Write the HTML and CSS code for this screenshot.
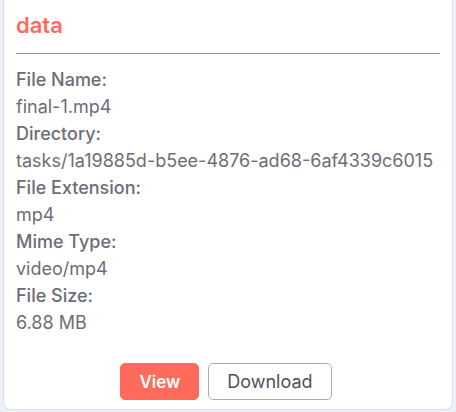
FILE: index.html
```html
<!DOCTYPE html>
<html lang="en">
<head>
<meta charset="utf-8">
<link rel="stylesheet" href="styles.css">
</head>
<body>
<div class="page">
  <section class="card">
    <h2 class="title">data</h2>
    <hr class="divider">
    <dl class="fields">
      <dt>File Name:</dt>
      <dd>final-1.mp4</dd>
      <dt>Directory:</dt>
      <dd>tasks/1a19885d-b5ee-4876-ad68-6af4339c6015</dd>
      <dt>File Extension:</dt>
      <dd>mp4</dd>
      <dt>Mime Type:</dt>
      <dd>video/mp4</dd>
      <dt>File Size:</dt>
      <dd>6.88 MB</dd>
    </dl>
    <div class="actions">
      <button class="btn btn-primary" type="button">View</button>
      <button class="btn btn-outline" type="button">Download</button>
    </div>
  </section>
</div>
</body>
</html>
```
FILE: styles.css
```css
* { box-sizing: border-box; }
html, body {
  margin: 0;
  padding: 0;
  background: #eef0f8;
  font-family: Inter, "Noto Sans", sans-serif;
}
.page {
  padding: 0 3px;
  height: 412px;
  overflow: hidden;
}
.card {
  margin-top: -20px;
  background: #ffffff;
  border: 1px solid #dcdfeb;
  border-radius: 8px;
  padding: 30px 12px 9px;
}
.title {
  margin: 0;
  font-size: 22px;
  line-height: 28px;
  font-weight: 600;
  color: #ff6b5b;
}
.divider {
  margin: 14px 0 0;
  border: 0;
  border-top: 1px solid #9b9b9e;
  height: 0;
}
.fields {
  margin: 12px 0 0;
  font-size: 18px;
  line-height: 27px;
  color: #6b6e76;
}
.fields dt {
  font-weight: 500;
}
.fields dd {
  margin: 0;
  font-weight: 400;
}
.actions {
  display: flex;
  justify-content: center;
  gap: 5px;
  margin-top: 27px;
}
.btn {
  font-family: inherit;
  font-size: 18px;
  height: 37px;
  padding: 0 18px;
  border-radius: 5px;
  margin-right: 4px;
  cursor: pointer;
}
.btn-primary {
  background: #ff6b5b;
  border: 1px solid #ff6b5b;
  color: #ffffff;
  font-size: 17px;
  font-weight: 600;
}
.btn-outline {
  background: #ffffff;
  border: 1px solid #a9adb9;
  color: #4f5159;
  font-weight: 400;
}
```
